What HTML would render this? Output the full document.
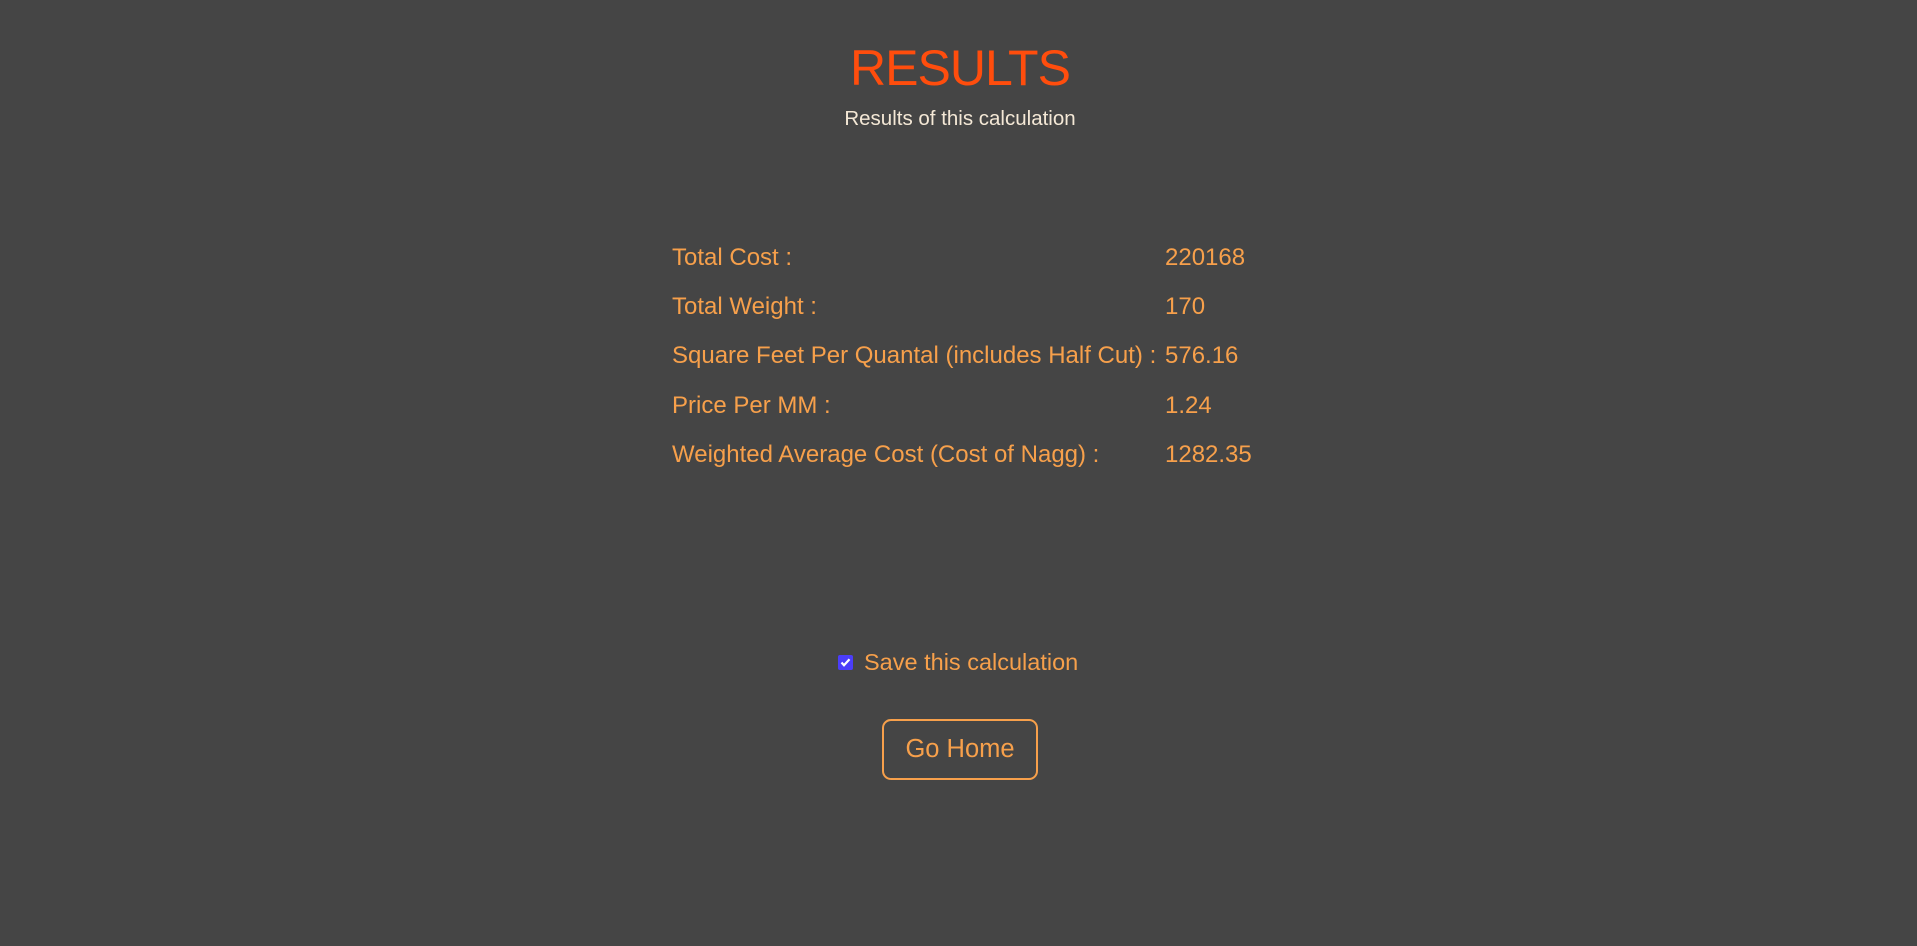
<!DOCTYPE html>
<html><head><style>
html,body{margin:0;padding:0;background:#454545;width:1917px;height:946px;overflow:hidden;font-family:"Liberation Sans",sans-serif}
.abs{position:absolute;white-space:nowrap}
h1{position:absolute;left:0;width:1920px;text-align:center;top:39px;margin:0;font-weight:normal;font-size:50px;color:#ff4d0d;letter-spacing:-1px}
.sub{left:0;width:1920px;text-align:center;top:107px;font-size:20.5px;color:#f4e8d6}
.lab,.val{font-size:24px;color:#f7a04b;letter-spacing:0}
.cb{position:absolute;left:838px;top:655px;width:15px;height:15px;background:#4b3dfa;border-radius:2px}
.btn{position:absolute;left:882px;top:719px;width:152px;height:57px;border:2px solid #f7a04b;border-radius:9px;color:#f7a04b;font-size:25.5px;text-align:center;line-height:57px}
</style></head><body>
<h1>RESULTS</h1>
<div class="abs sub">Results of this calculation</div>
<div class="abs lab" style="left:672px;top:244px">Total Cost :</div>
<div class="abs val" style="left:1165px;top:244px">220168</div>
<div class="abs lab" style="left:672px;top:293px">Total Weight :</div>
<div class="abs val" style="left:1165px;top:293px">170</div>
<div class="abs lab" style="left:672px;top:342px">Square Feet Per Quantal (includes Half Cut) :</div>
<div class="abs val" style="left:1165px;top:342px">576.16</div>
<div class="abs lab" style="left:672px;top:392px">Price Per MM :</div>
<div class="abs val" style="left:1165px;top:392px">1.24</div>
<div class="abs lab" style="left:672px;top:441px">Weighted Average Cost (Cost of Nagg) :</div>
<div class="abs val" style="left:1165px;top:441px">1282.35</div>
<div class="cb"><svg width="15" height="15" viewBox="0 0 15 15"><path d="M3.5 7.5l2.5 2.7 5.5-6" stroke="#fff" stroke-width="2.2" fill="none"/></svg></div>
<div class="abs lab" style="left:864px;top:649px;font-size:23.5px">Save this calculation</div>
<div class="btn">Go Home</div>
</body></html>
